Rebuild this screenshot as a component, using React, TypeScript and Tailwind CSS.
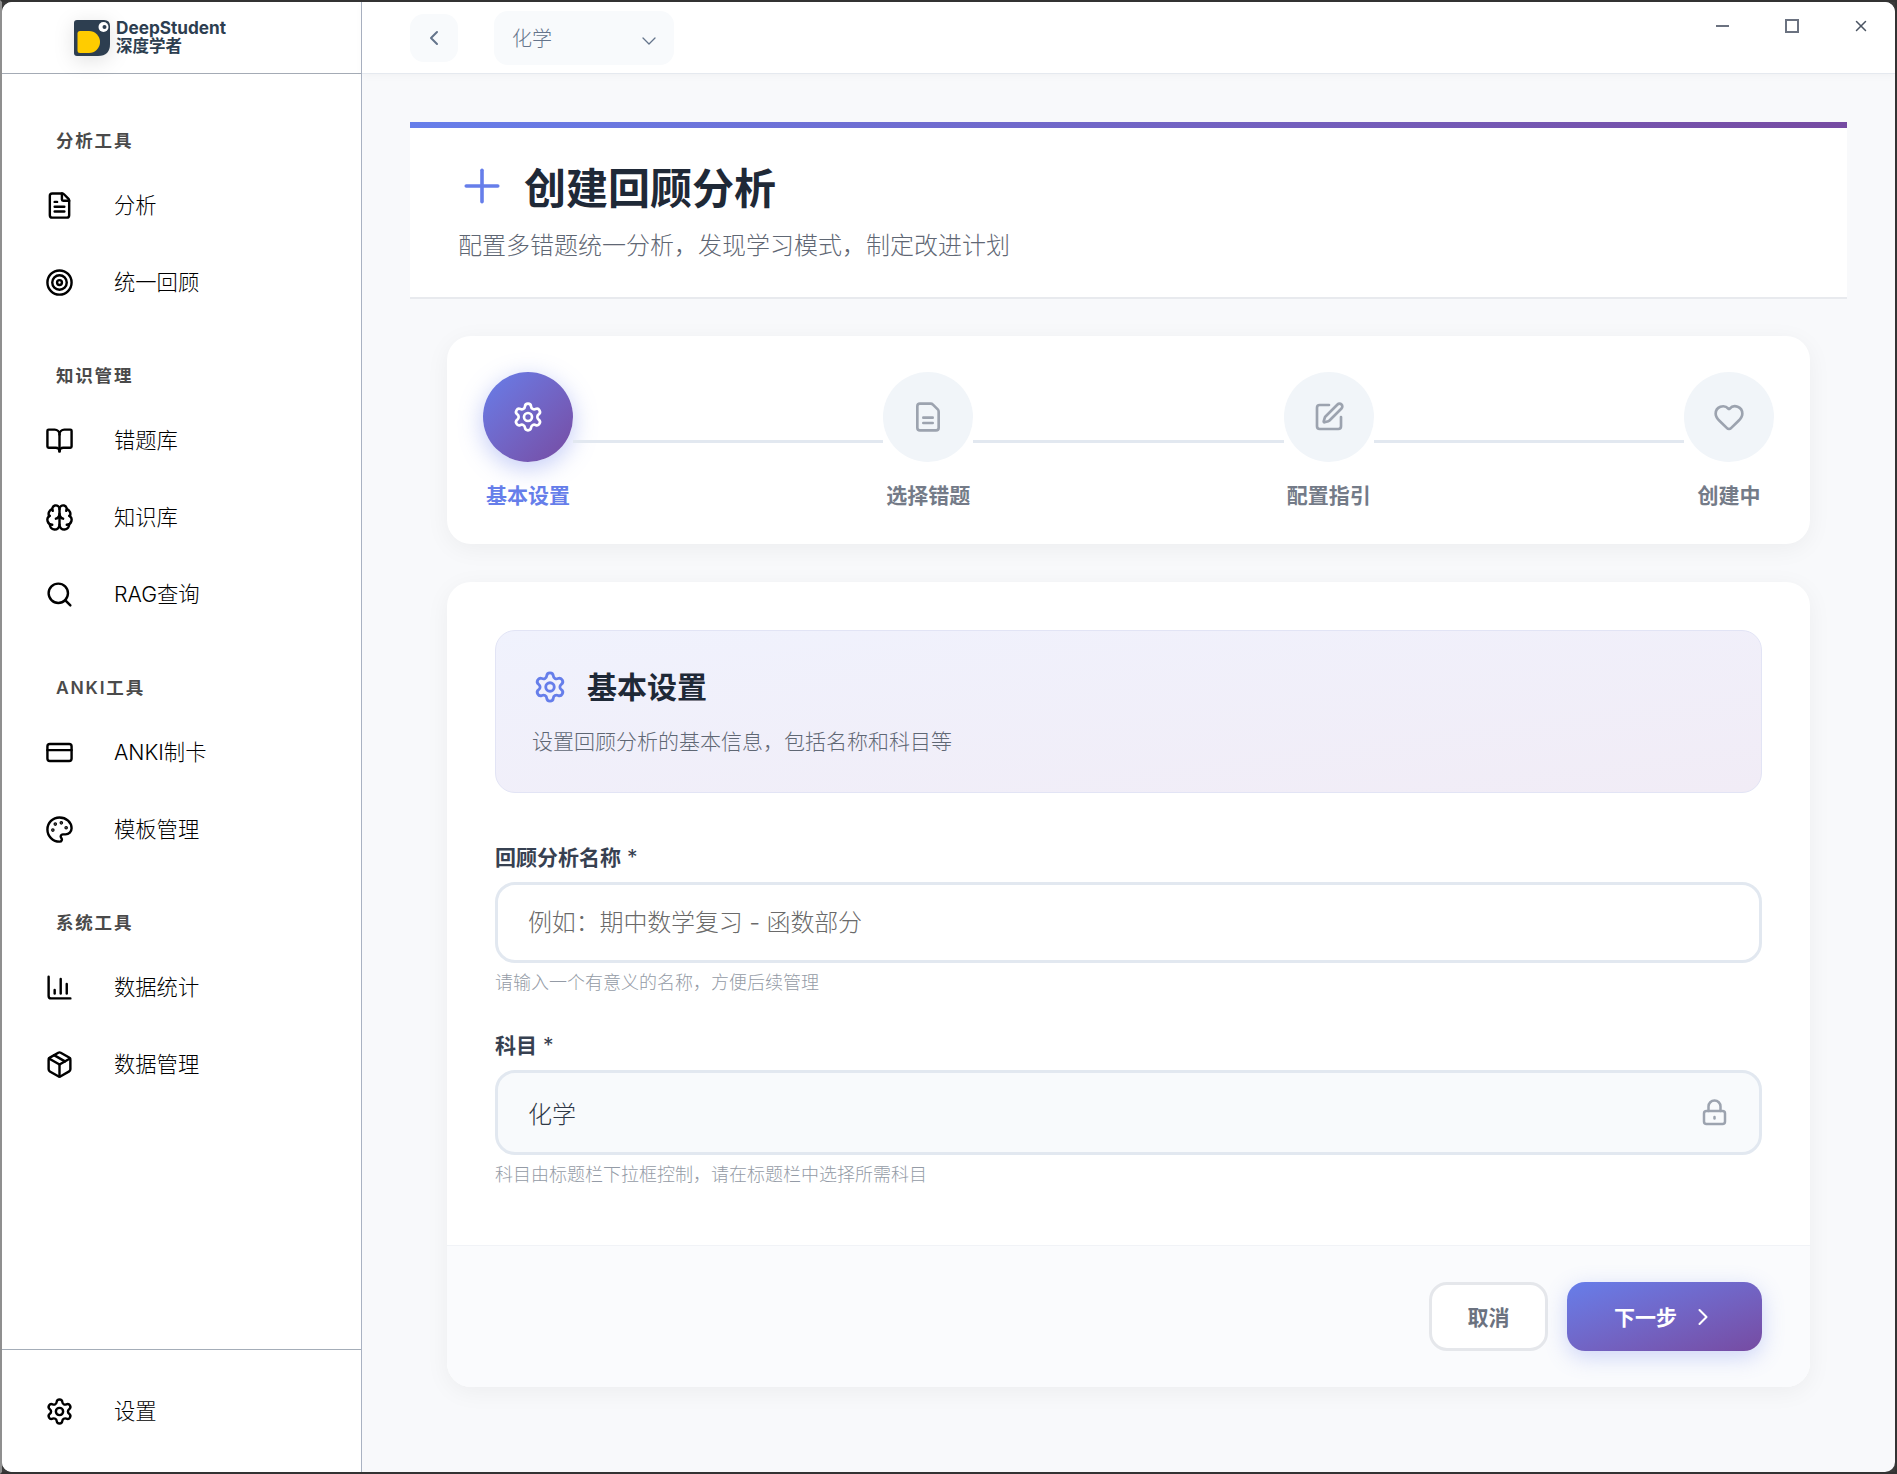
import {
  BookOpen,
  Brain,
  ChartColumn,
  ChevronDown,
  ChevronLeft,
  ChevronRight,
  CreditCard,
  FileText,
  Heart,
  Package,
  Palette,
  Plus,
  Search,
  Settings,
  SquarePen,
  Target,
  X,
} from "lucide-react";

const FONT = "font-['Inter','Noto_Sans_CJK_SC',sans-serif]";

const NAV = [
  {
    title: "分析工具",
    items: [
      { label: "分析", icon: FileText },
      { label: "统一回顾", icon: Target },
    ],
  },
  {
    title: "知识管理",
    items: [
      { label: "错题库", icon: BookOpen },
      { label: "知识库", icon: Brain },
      { label: "RAG查询", icon: Search },
    ],
  },
  {
    title: "ANKI工具",
    items: [
      { label: "ANKI制卡", icon: CreditCard },
      { label: "模板管理", icon: Palette },
    ],
  },
  {
    title: "系统工具",
    items: [
      { label: "数据统计", icon: ChartColumn },
      { label: "数据管理", icon: Package },
    ],
  },
];

function Logo() {
  return (
    <svg width="36" height="36" viewBox="0 0 36 36">
      <path d="M3 0H30Q36 0 36 6V24Q36 36 24 36H3Q0 36 0 33V3Q0 0 3 0Z" fill="#2d3e50" />
      <path d="M6 11H15A11 11 0 0 1 15 33H6Q3.500 33 3.500 30.500V13.500Q3.500 11 6 11Z" fill="#ffcc00" />
      <circle cx="29.500" cy="7" r="5" fill="#fff" />
      <circle cx="30.500" cy="7" r="2" fill="#2d3e50" />
    </svg>
  );
}

function LockIcon() {
  return (
    <svg width="25" height="27" viewBox="0 0 25 27" fill="none" stroke="#9ca3af" strokeWidth="2.500" strokeLinecap="round">
      <rect x="2" y="12" width="21" height="13" rx="2.500" />
      <path d="M6.500 12V7.500a6 6 0 0 1 12 0V12" />
      <path d="M12.500 18v1.500" />
    </svg>
  );
}

// the step icon has two even lines, lucide's FileText has three
function FileLines({ size }: { size: number }) {
  return (
    <svg width={size} height={size} viewBox="0 0 24 24" fill="none" stroke="currentColor" strokeWidth="2" strokeLinecap="round" strokeLinejoin="round">
      <path d="M6 22a2 2 0 0 1-2-2V4a2 2 0 0 1 2-2h8a2.400 2.400 0 0 1 1.700.7l3.600 3.600A2.400 2.400 0 0 1 20 8v12a2 2 0 0 1-2 2z" />
      <path d="M8.500 12.500h7" />
      <path d="M8.500 16.500h7" />
    </svg>
  );
}

const STEPS = [
  { label: "基本设置", icon: Settings, active: true },
  { label: "选择错题", icon: FileLines, active: false },
  { label: "配置指引", icon: SquarePen, active: false },
  { label: "创建中", icon: Heart, active: false },
];

function Sidebar() {
  return (
    <aside className="w-[360px] shrink-0 flex flex-col bg-white border-r border-[#a9b2c2]">
      <div className="h-[72px] shrink-0 flex items-center pl-[72px] gap-[6px] border-b border-[#a4abb5]">
        <div className="drop-shadow-[0_4px_10px_rgba(0,0,0,0.12)]">
          <Logo />
        </div>
        <div className="text-[#2d3e50] font-bold leading-[18px] -mt-[2px]">
          <div className="text-[17.200px]">DeepStudent</div>
          <div className="text-[16.500px]">深度学者</div>
        </div>
      </div>

      <nav className="flex-1 pt-[51px] flex flex-col gap-[39px]">
        {NAV.map((group) => (
          <div key={group.title}>
            <div className="h-[34px] mb-[8px] pl-[54px] pb-[2px] flex items-center text-[17.500px] font-semibold tracking-[1.800px] text-[#4a4a4a]">
              {group.title}
            </div>
            {group.items.map((item) => (
              <div key={item.label} className="h-[77px] flex items-center pl-[43px] gap-[40px] text-black">
                <item.icon size={29} strokeWidth={2} />
                <span className="text-[21.300px] font-light pt-[1px]">{item.label}</span>
              </div>
            ))}
          </div>
        ))}
      </nav>

      <div className="h-[123px] shrink-0 border-t border-[#a4adb8] flex items-center pl-[43px] gap-[40px] text-black">
        <Settings size={29} strokeWidth={2} />
        <span className="text-[21.300px] font-light pt-[2px]">设置</span>
      </div>
    </aside>
  );
}

function TitleBar() {
  return (
    <header className="relative z-10 h-[72px] shrink-0 flex items-center bg-white pl-[48px] border-b border-[#e5e9ef] shadow-[0_2px_8px_rgba(0,0,0,0.03)]">
      <button className="w-[48px] h-[48px] rounded-[14px] bg-[#f8fafc] flex items-center justify-center text-[#64748b]">
        <ChevronLeft size={24} strokeWidth={2} />
      </button>
      <div className="ml-[36px] w-[180px] h-[54px] rounded-[14px] bg-[#f8fafc] flex items-center justify-between pl-[18px] pr-[13px] text-[#64748b]">
        <span className="text-[20px] font-light pt-[2px]">化学</span>
        <ChevronDown size={24} strokeWidth={1.300} className="mt-[6px]" />
      </div>
      <div className="ml-auto self-start flex text-[#6b7280]">
        <div className="w-[69px] h-[48px] flex items-center justify-center">
          <div className="w-[13px] h-[2px] bg-[#6b7280]" />
        </div>
        <div className="w-[69px] h-[48px] flex items-center justify-center">
          <div className="w-[14px] h-[14px] border-2 border-[#6b7280]" />
        </div>
        <div className="w-[69px] h-[48px] flex items-center justify-center text-[#4b5563]">
          <X size={18} strokeWidth={2} />
        </div>
      </div>
    </header>
  );
}

function Stepper() {
  return (
    <div className="rounded-[24px] bg-white p-[36px] flex shadow-[0_5px_24px_rgba(0,0,0,0.05)]">
      {STEPS.map((step, i) => (
        <div key={step.label} className={i < STEPS.length - 1 ? "flex flex-1" : "flex"}>
          <div className="w-[90px] flex flex-col items-center">
            <div
              className={
                step.active
                  ? "w-[90px] h-[90px] rounded-full flex items-center justify-center text-white bg-gradient-to-br from-[#667eea] to-[#764ba2] shadow-[0_6px_24px_rgba(102,126,234,0.4)]"
                  : "w-[90px] h-[90px] rounded-full flex items-center justify-center text-[#9ca3af] bg-[#f1f5f9]"
              }
            >
              <step.icon size={32} />
            </div>
            <div
              className={
                step.active
                  ? "mt-[22px] h-[24px] leading-[24px] text-[21px] font-semibold whitespace-nowrap text-[#667eea]"
                  : "mt-[22px] h-[24px] leading-[24px] text-[21px] font-semibold whitespace-nowrap text-[#747b88]"
              }
            >
              {step.label}
            </div>
          </div>
          {i < STEPS.length - 1 && <div className="flex-1 h-[3px] mt-[68px] bg-[#e2e8f0]" />}
        </div>
      ))}
    </div>
  );
}

function Field({ label, hint, children }: { label: string; hint: string; children: React.ReactNode }) {
  return (
    <div>
      <div className="h-[26px] mb-[11px] leading-[26px] text-[21px] text-[#374151]">
        <span className="font-semibold">{label}</span> *
      </div>
      {children}
      <div className="mt-[8px] h-[24px] leading-[24px] text-[18px] font-light text-[#949ba6]">{hint}</div>
    </div>
  );
}

export default function App() {
  return (
    <div
      className={`${FONT} w-[1897px] h-[1474px] overflow-hidden bg-[#3a3a3a] border-2 border-[#333333] border-l-[#8f8f8f]`}
    >
      <div className="w-full h-full rounded-[10px] overflow-hidden flex bg-[#f8f9fb]">
        <Sidebar />
        <div className="flex-1 min-w-0 flex flex-col">
          <TitleBar />
          <main className="flex-1 px-[48px] pt-[48px]">
            <div className="h-[6px] bg-gradient-to-r from-[#667eea] to-[#764ba2]" />
            <div className="h-[171px] bg-white border-b-2 border-[#e8eaee] pl-[48px] pt-[35px]">
              <div className="flex items-center h-[52px]">
                <Plus size={54} strokeWidth={1.600} className="text-[#667eea] -ml-[3px] -mt-[6px]" />
                <h1 className="ml-[15px] text-[42px] leading-[52px] font-bold text-[#1f2937]">创建回顾分析</h1>
              </div>
              <p className="mt-[7px] text-[24px] leading-[48px] font-light text-[#5f6774]">
                配置多错题统一分析，发现学习模式，制定改进计划
              </p>
            </div>

            <div className="px-[37px] pt-[37px] flex flex-col gap-[38px]">
              <Stepper />

              <section className="rounded-[24px] bg-white overflow-hidden shadow-[0_5px_24px_rgba(0,0,0,0.05)]">
                <div className="px-[48px] pt-[48px] pb-[58px]">
                  <div className="h-[163px] rounded-[20px] border border-[#e2e4f5] bg-gradient-to-br from-[#f0f2fd] to-[#f1ecf6] pl-[36px] pt-[36px]">
                    <div className="flex items-center h-[40px]">
                      <Settings size={34} strokeWidth={2} className="text-[#667eea] ml-[1px]" />
                      <h2 className="ml-[20px] text-[30px] leading-[40px] font-bold text-[#1f2937]">基本设置</h2>
                    </div>
                    <p className="mt-[21px] text-[21px] leading-[28px] font-light text-[#5f6774]">
                      设置回顾分析的基本信息，包括名称和科目等
                    </p>
                  </div>

                  <div className="mt-[52px] flex flex-col gap-[38px]">
                    <Field label="回顾分析名称" hint="请输入一个有意义的名称，方便后续管理">
                      <input
                        placeholder="例如：期中数学复习 - 函数部分"
                        className="w-full h-[81px] rounded-[20px] border-[3px] border-[#e2e8f0] bg-white px-[30px] text-[24px] font-light tracking-[-0.150px] outline-none placeholder:text-[#6a6a6a]"
                      />
                    </Field>
                    <Field label="科目" hint="科目由标题栏下拉框控制，请在标题栏中选择所需科目">
                      <div className="h-[85px] rounded-[20px] border-[3px] border-[#e2e8f0] bg-[#f8fafc] pl-[30px] pr-[32px] flex items-center justify-between">
                        <span className="text-[24px] font-light text-[#2f3846] pt-[4px]">化学</span>
                        <LockIcon />
                      </div>
                    </Field>
                  </div>
                </div>

                <div className="h-[142px] bg-[#fafbfd] border-t border-[#f1f3f7] pr-[48px] flex items-center justify-end gap-[19px]">
                  <button className="w-[119px] h-[69px] rounded-[18px] border-[3px] border-[#e5e7eb] bg-white pt-[2px] text-[21px] font-semibold text-[#6b7280]">
                    取消
                  </button>
                  <button className="w-[195px] h-[69px] rounded-[18px] bg-gradient-to-br from-[#667eea] to-[#764ba2] pl-[2px] text-white text-[21px] font-semibold flex items-center justify-center gap-[12px] shadow-[0_6px_22px_rgba(102,126,234,0.3)]">
                    <span className="pt-[2px]">下一步</span>
                    <ChevronRight size={28} strokeWidth={1.800} />
                  </button>
                </div>
              </section>
            </div>
          </main>
        </div>
      </div>
    </div>
  );
}
